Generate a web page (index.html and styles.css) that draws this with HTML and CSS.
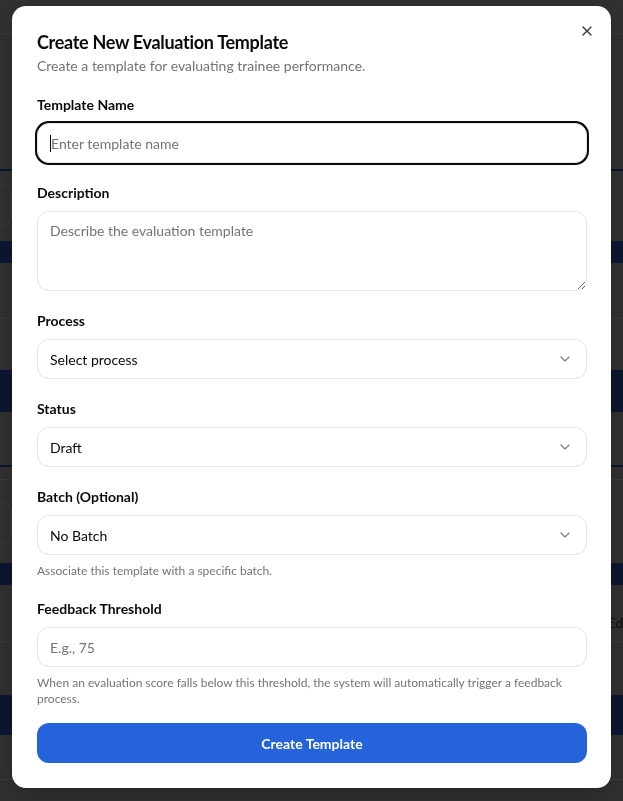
FILE: index.html
```html
<!DOCTYPE html>
<html lang="en">
<head>
<meta charset="utf-8">
<title>Create New Evaluation Template</title>
<link rel="stylesheet" href="styles.css">
</head>
<body>
<div class="page">
  <div class="strip h33 line"></div>
  <div class="strip h135"></div>
  <div class="strip h2 navy"></div>
  <div class="strip h70 boxrow"><span class="ghost-box"></span></div>
  <div class="strip h22 navy"></div>
  <div class="strip h56 line"></div>
  <div class="strip h50"></div>
  <div class="strip h42 navy"></div>
  <div class="strip h53"></div>
  <div class="strip h2 navy"></div>
  <div class="strip h13 line"></div>
  <div class="strip h83 boxrow"><span class="ghost-box"></span></div>
  <div class="strip h22 navy"></div>
  <div class="strip h57 line low"><span class="edge-text">Ed</span></div>
  <div class="strip h53"></div>
  <div class="strip h40 navy"></div>
  <div class="strip h45 line"></div>
  <div class="strip h40"></div>
</div>

<div class="overlay">
  <div class="dialog" role="dialog">
    <button class="close" type="button" aria-label="Close">
      <svg viewBox="0 0 24 24" width="16" height="16" fill="none" stroke="currentColor" stroke-width="2" stroke-linecap="round" stroke-linejoin="round"><path d="M18 6 6 18"/><path d="m6 6 12 12"/></svg>
    </button>
    <div class="header">
      <h2 class="title">Create New Evaluation Template</h2>
      <p class="subtitle">Create a template for evaluating trainee performance.</p>
    </div>
    <form class="form">
      <div class="field">
        <label class="label">Template Name</label>
        <div class="input focused"><span class="caret"></span><span class="placeholder">Enter template name</span></div>
      </div>
      <div class="field">
        <label class="label">Description</label>
        <textarea class="textarea" placeholder="Describe the evaluation template"></textarea>
      </div>
      <div class="field">
        <label class="label">Process</label>
        <div class="select"><span>Select process</span>
          <svg class="chev" viewBox="0 0 24 24" width="16" height="16" fill="none" stroke="currentColor" stroke-width="2" stroke-linecap="round" stroke-linejoin="round"><path d="m6 9 6 6 6-6"/></svg>
        </div>
      </div>
      <div class="field">
        <label class="label">Status</label>
        <div class="select"><span>Draft</span>
          <svg class="chev" viewBox="0 0 24 24" width="16" height="16" fill="none" stroke="currentColor" stroke-width="2" stroke-linecap="round" stroke-linejoin="round"><path d="m6 9 6 6 6-6"/></svg>
        </div>
      </div>
      <div class="field">
        <label class="label">Batch (Optional)</label>
        <div class="select"><span>No Batch</span>
          <svg class="chev" viewBox="0 0 24 24" width="16" height="16" fill="none" stroke="currentColor" stroke-width="2" stroke-linecap="round" stroke-linejoin="round"><path d="m6 9 6 6 6-6"/></svg>
        </div>
        <p class="help">Associate this template with a specific batch.</p>
      </div>
      <div class="field">
        <label class="label">Feedback Threshold</label>
        <div class="input"><span class="placeholder">E.g., 75</span></div>
        <p class="help">When an evaluation score falls below this threshold, the system will automatically trigger a feedback process.</p>
      </div>
      <button class="submit" type="button">Create Template</button>
    </form>
  </div>
</div>
</body>
</html>
```

FILE: styles.css
```css
* { box-sizing: border-box; }
html, body { margin: 0; padding: 0; }
body {
  width: 623px;
  height: 801px;
  overflow: hidden;
  background: #313131;
  font-family: "Lato", "Open Sans", Arial, sans-serif;
  color: #0a0a0a;
}

/* background page (dimmed) */
.page { display: flex; flex-direction: column; }
.strip { display: flex; align-items: center; justify-content: space-between; background: #313131; }
.strip.low { align-items: flex-start; padding-top: 30px; }
.line { border-bottom: 1px solid #3b3b3b; }
.navy { background: #0b1630; }
.h2 { height: 2px; } .h13 { height: 13px; } .h22 { height: 22px; } .h33 { height: 34px; }
.h40 { height: 40px; } .h42 { height: 42px; } .h45 { height: 45px; } .h50 { height: 51px; }
.h53 { height: 53px; } .h56 { height: 56px; } .h57 { height: 57px; } .h70 { height: 70px; }
.h83 { height: 83px; } .h135 { height: 135px; }
.ghost-box { width: 30px; height: 42px; margin-left: -18px; border: 1px solid #3d3d3d; border-radius: 10px; }
.edge-text { margin-left: auto; font-size: 14px; line-height: 16px; color: #0d0d0d; }

/* overlay + dialog */
.overlay {
  position: fixed;
  inset: 0;
  display: flex;
  align-items: flex-start;
  padding: 6px 0 0 12px;
}
.dialog {
  position: relative;
  width: 599px;
  background: #fff;
  border-radius: 14px;
  padding: 24px 24px 25px 25px;
  box-shadow: 0 10px 25px rgba(0,0,0,0.2);
}
.close {
  position: absolute;
  top: 17px;
  right: 16px;
  width: 16px;
  height: 16px;
  padding: 0;
  border: 0;
  background: none;
  color: #3a3a3a;
  display: flex;
}
.header { display: flex; flex-direction: column; gap: 2px; }
.title {
  margin: 0;
  font-size: 18px;
  line-height: 24px;
  font-weight: 700;
  letter-spacing: -0.3px;
  color: #0a0a0a;
}
.subtitle {
  margin: 0;
  font-size: 14px;
  line-height: 20px;
  color: #737373;
}

.form { display: flex; flex-direction: column; gap: 20px; margin-top: 19px; }
.field { display: flex; flex-direction: column; gap: 8px; }
.label { font-size: 14px; line-height: 20px; font-weight: 700; color: #0a0a0a; }

.input, .select, .textarea {
  width: 100%;
  height: 40px;
  border: 1px solid #e5e5e5;
  border-radius: 12px;
  background: #fff;
  font: inherit;
  font-size: 14px;
  display: flex;
  align-items: center;
  padding: 0 12px;
}
.input.focused { box-shadow: 0 0 0 2px #0a0a0a; }
.caret { width: 1px; height: 17px; background: #0a0a0a; }
.placeholder { color: #777370; }
.textarea {
  display: block;
  height: 80px;
  padding: 9px 12px;
  resize: vertical;
  color: #0a0a0a;
  line-height: 20px;
  outline: none;
}
.textarea::placeholder { color: #777370; opacity: 1; }
.select { justify-content: space-between; color: #0a0a0a; }
.chev { color: #0a0a0a; opacity: 0.5; margin-right: 1px; }
.help { margin: 0; font-size: 12px; line-height: 16px; color: #777370; }

.submit {
  margin-top: -4px;
  height: 40px;
  width: 100%;
  border: 0;
  border-radius: 12px;
  background: #2563da;
  color: #fff;
  font: inherit;
  font-size: 14px;
  font-weight: 700;
}
```
